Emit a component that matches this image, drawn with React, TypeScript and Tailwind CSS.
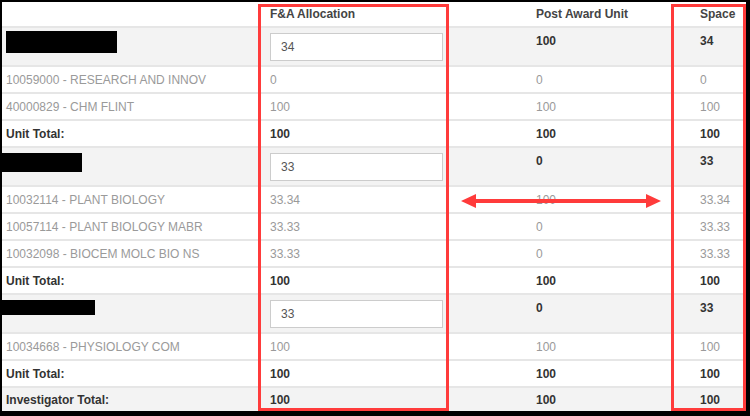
import React from "react";

type Row =
  | { kind: "group"; box: { w: number; h: number; top: number; ml: number }; input: string; pau: string; space: string }
  | { kind: "detail"; label: string; fa: string; pau: string; space: string }
  | { kind: "total"; label: string; fa: string; pau: string; space: string; gray?: boolean; h?: number };

const rows: Row[] = [
  { kind: "group", box: { w: 111, h: 22, top: 3, ml: 0 }, input: "34", pau: "100", space: "34" },
  { kind: "detail", label: "10059000 - RESEARCH AND INNOV", fa: "0", pau: "0", space: "0" },
  { kind: "detail", label: "40000829 - CHM FLINT", fa: "100", pau: "100", space: "100" },
  { kind: "total", label: "Unit Total:", fa: "100", pau: "100", space: "100" },
  { kind: "group", box: { w: 80, h: 19, top: 5, ml: -4 }, input: "33", pau: "0", space: "33" },
  { kind: "detail", label: "10032114 - PLANT BIOLOGY", fa: "33.34", pau: "100", space: "33.34" },
  { kind: "detail", label: "10057114 - PLANT BIOLOGY MABR", fa: "33.33", pau: "0", space: "33.33" },
  { kind: "detail", label: "10032098 - BIOCEM MOLC BIO NS", fa: "33.33", pau: "0", space: "33.33" },
  { kind: "total", label: "Unit Total:", fa: "100", pau: "100", space: "100" },
  { kind: "group", box: { w: 93, h: 15, top: 5, ml: -4 }, input: "33", pau: "0", space: "33" },
  { kind: "detail", label: "10034668 - PHYSIOLOGY COM", fa: "100", pau: "100", space: "100" },
  { kind: "total", label: "Unit Total:", fa: "100", pau: "100", space: "100" },
  { kind: "total", label: "Investigator Total:", fa: "100", pau: "100", space: "100", gray: true, h: 26 },
];

const grid = "grid grid-cols-[260px_266px_164px_54px]";

function RowView({ row }: { row: Row }) {
  if (row.kind === "group") {
    return (
      <div className={`${grid} h-[39px] bg-[#f3f3f3] border-b-2 border-[#e6e6e6]`}>
        <div className="pl-[4px]">
          <div
            className="bg-black"
            style={{ width: row.box.w, height: row.box.h, marginTop: row.box.top, marginLeft: row.box.ml }}
          />
        </div>
        <div className="pl-[8px] pt-[5px]">
          <div className="w-[173px] h-[28px] border border-[#cccccc] bg-white flex items-center pl-[10px] text-[12px] text-[#555]">
            {row.input}
          </div>
        </div>
        <div className="pl-[8px] pt-[6px] font-bold text-[#333]">{row.pau}</div>
        <div className="pl-[8px] pt-[6px] font-bold text-[#333]">{row.space}</div>
      </div>
    );
  }
  if (row.kind === "detail") {
    return (
      <div className={`${grid} h-[27px] items-center bg-white border-b-2 border-[#e6e6e6] text-[#9a9a9a]`}>
        <div className="pl-[4px] whitespace-nowrap">{row.label}</div>
        <div className="pl-[8px]">{row.fa}</div>
        <div className="pl-[8px]">{row.pau}</div>
        <div className="pl-[8px]">{row.space}</div>
      </div>
    );
  }
  return (
    <div
      className={`${grid} items-center border-b-2 border-[#e6e6e6] font-bold text-[#333] ${row.gray ? "bg-[#f3f3f3]" : "bg-white"}`}
      style={{ height: row.h ?? 27 }}
    >
      <div className="pl-[4px] whitespace-nowrap">{row.label}</div>
      <div className="pl-[8px]">{row.fa}</div>
      <div className="pl-[8px]">{row.pau}</div>
      <div className="pl-[8px]">{row.space}</div>
    </div>
  );
}

export default function App() {
  return (
    <div
      className="relative w-[750px] h-[416px] bg-black overflow-hidden text-[12px] leading-[14px]"
      style={{ fontFamily: '"Liberation Sans", Arial, sans-serif' }}
    >
      <div className="absolute left-[2px] top-[2px] w-[744px] h-[409px] bg-white overflow-hidden">
        <div className={`${grid} h-[26px] items-center pb-[1px] border-b-2 border-[#e6e6e6] font-bold text-[#444]`}>
          <div />
          <div className="pl-[8px]">F&amp;A Allocation</div>
          <div className="pl-[8px]">Post Award Unit</div>
          <div className="pl-[8px]">Space</div>
        </div>
        {rows.map((r, i) => (
          <RowView key={i} row={r} />
        ))}
      </div>

      {/* Red highlight rectangles */}
      <div className="absolute left-[258px] top-[4px] w-[191px] h-[407px] border-[3px] border-[#ff3b3b]" />
      <div className="absolute left-[671px] top-[4px] w-[75px] h-[407px] border-[3px] border-[#ff3b3b]" />

      {/* Double-headed arrow */}
      <svg className="absolute left-[459px] top-[192px]" width="204" height="18" viewBox="0 0 204 18">
        <line x1="14" y1="9" x2="190" y2="9" stroke="#ff3b3b" strokeWidth="4" />
        <polygon points="2,9 17,2 17,16" fill="#ff3b3b" />
        <polygon points="202,9 187,2 187,16" fill="#ff3b3b" />
      </svg>
    </div>
  );
}
